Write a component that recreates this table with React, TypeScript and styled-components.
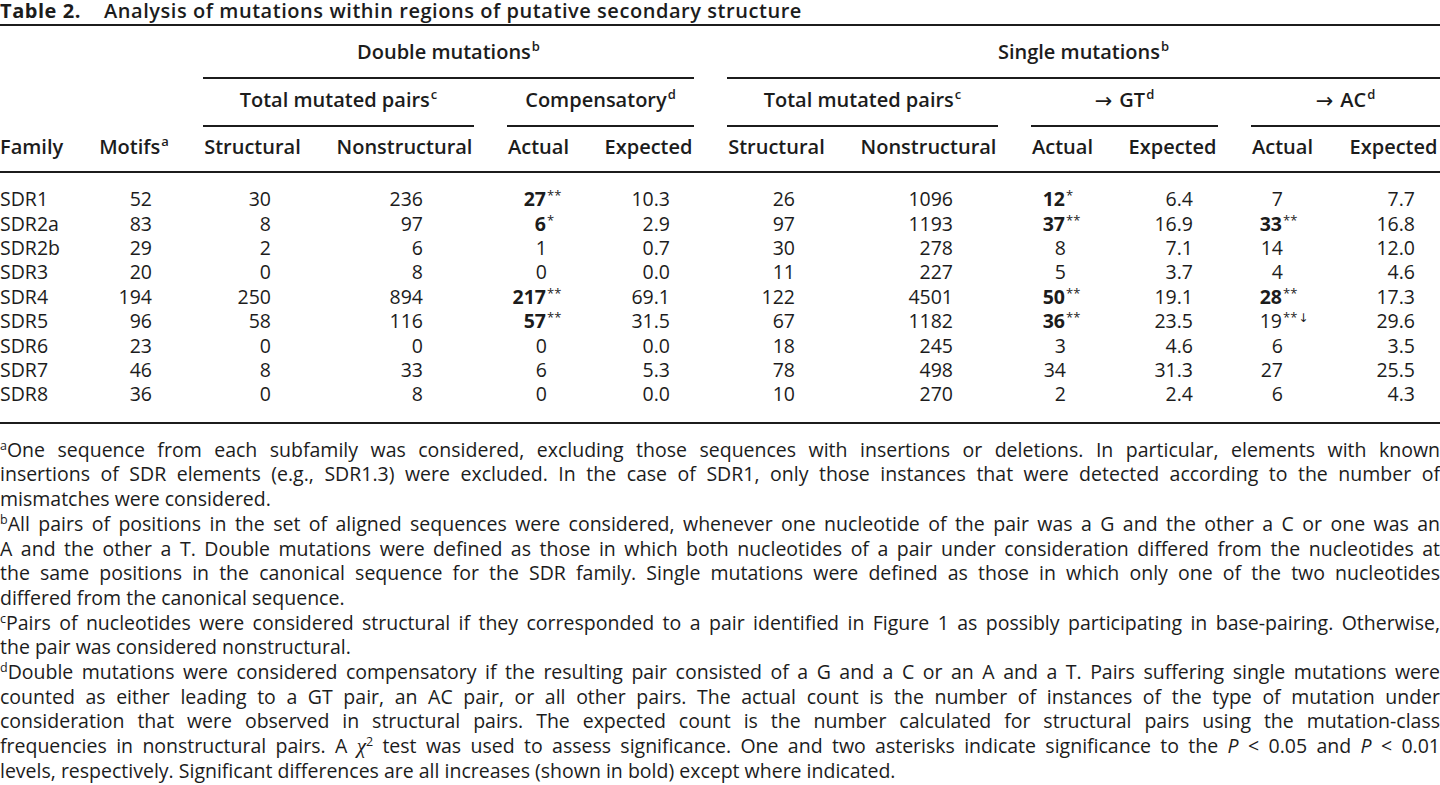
import React from "react";
import styled, { createGlobalStyle } from "styled-components";

const INK = "#1c1c1c";
const COLS =
  "65px 72px 99px 139px 63px 91px 99px 139px 63px 91px 63px minmax(91px, 1fr)";

const GlobalStyle = createGlobalStyle`
  html, body { margin: 0; padding: 0; background: #ffffff; }
  body {
    font-family: "Open Sans", "Noto Sans", "DejaVu Sans", sans-serif;
    color: ${INK};
    -webkit-font-smoothing: antialiased;
  }
`;

const Page = styled.main`
  width: 1440px;
  display: flex;
  flex-direction: column;
`;

const Caption = styled.h1`
  margin: 0;
  display: flex;
  gap: 23px;
  font-size: 20px;
  line-height: 20px;
  font-weight: 600;
  letter-spacing: 0.55px;
  padding: 1px 0 3px;
  border-bottom: 2px solid ${INK};
  white-space: nowrap;
`;

const CaptionLabel = styled.span`
  font-weight: 700;
`;

const TableHead = styled.div`
  display: grid;
  grid-template-columns: ${COLS};
  column-gap: 33px;
  font-size: 20px;
  line-height: 24px;
  font-weight: 600;
  border-bottom: 2px solid ${INK};
`;

const Spanner = styled.div<{ $col: string; $row: number; $pt: number; $pb: number }>`
  grid-column: ${(p) => p.$col};
  grid-row: ${(p) => p.$row};
  text-align: center;
  white-space: nowrap;
  padding: ${(p) => p.$pt}px 0 ${(p) => p.$pb}px;
  border-bottom: 2px solid ${INK};
`;

const ColHead = styled.div<{ $left?: boolean }>`
  grid-row: 3;
  text-align: ${(p) => (p.$left ? "left" : "center")};
  white-space: nowrap;
  padding: 8.5px 0 12px;
`;

const Sup = styled.span`
  font-size: 13px;
  line-height: 0;
  vertical-align: 8px;
  margin-left: 1px;
`;

const Arrow = styled.span`
  font-family: "DejaVu Sans", "Liberation Serif", serif;
  font-weight: 400;
  font-size: 21px;
  line-height: 0;
  vertical-align: -1px;
  margin-right: 7px;
`;

const BodyGrid = styled.div`
  display: grid;
  grid-template-columns: ${COLS};
  grid-template-rows: repeat(9, 24.4px);
  column-gap: 33px;
  font-size: 19.5px;
  line-height: 24.4px;
  padding: 14px 0 15px;
`;

const Rule = styled.div`
  height: 2px;
  background: ${INK};
  flex: none;
`;

const NameCell = styled.div`
  text-align: left;
  white-space: nowrap;
`;

const NumCell = styled.div<{ $pad: number }>`
  text-align: right;
  white-space: nowrap;
  padding-right: ${(p) => p.$pad}px;
`;

const Strong = styled.span`
  font-weight: 700;
`;

const Mark = styled.span`
  display: inline-block;
  width: 0;
  white-space: nowrap;
  font-size: 13px;
  line-height: 0;
  vertical-align: 6px;
  text-align: left;
  padding-left: 1px;
`;

const MarkArrow = styled.span`
  font-family: "DejaVu Sans", "Liberation Serif", serif;
  font-size: 12px;
  margin-left: 1px;
`;

const Notes = styled.section`
  padding-top: 14px;
  font-size: 19.5px;
  line-height: 24.7px;
`;

const Note = styled.div``;

const NoteLine = styled.span<{ $last?: boolean }>`
  display: block;
  text-align: justify;
  text-align-last: ${(p) => (p.$last ? "left" : "justify")};
`;

const NoteSup = styled.span`
  font-size: 12.5px;
  line-height: 0;
  vertical-align: 7px;
`;

const Greek = styled.span`
  font-family: "Liberation Serif", "DejaVu Serif", serif;
  font-style: italic;
  font-size: 21px;
`;

const Italic = styled.span`
  font-style: italic;
`;

type Cell = string | { v: string; b?: boolean; m?: string };

const PADS = [0, 18, 31, 51, 23, 24, 31, 45, 28, 25, 31, 25];

const ROWS: Cell[][] = [
  ["SDR1", "52", "30", "236", { v: "27", b: true, m: "**" }, "10.3", "26", "1096", { v: "12", b: true, m: "*" }, "6.4", "7", "7.7"],
  ["SDR2a", "83", "8", "97", { v: "6", b: true, m: "*" }, "2.9", "97", "1193", { v: "37", b: true, m: "**" }, "16.9", { v: "33", b: true, m: "**" }, "16.8"],
  ["SDR2b", "29", "2", "6", "1", "0.7", "30", "278", "8", "7.1", "14", "12.0"],
  ["SDR3", "20", "0", "8", "0", "0.0", "11", "227", "5", "3.7", "4", "4.6"],
  ["SDR4", "194", "250", "894", { v: "217", b: true, m: "**" }, "69.1", "122", "4501", { v: "50", b: true, m: "**" }, "19.1", { v: "28", b: true, m: "**" }, "17.3"],
  ["SDR5", "96", "58", "116", { v: "57", b: true, m: "**" }, "31.5", "67", "1182", { v: "36", b: true, m: "**" }, "23.5", { v: "19", m: "**↓" }, "29.6"],
  ["SDR6", "23", "0", "0", "0", "0.0", "18", "245", "3", "4.6", "6", "3.5"],
  ["SDR7", "46", "8", "33", "6", "5.3", "78", "498", "34", "31.3", "27", "25.5"],
  ["SDR8", "36", "0", "8", "0", "0.0", "10", "270", "2", "2.4", "6", "4.3"],
];

const COL_HEADS: React.ReactNode[] = [
  "Family",
  <>Motifs<Sup>a</Sup></>,
  "Structural",
  "Nonstructural",
  "Actual",
  "Expected",
  "Structural",
  "Nonstructural",
  "Actual",
  "Expected",
  "Actual",
  "Expected",
];

const renderMark = (m: string) => {
  if (m.endsWith("↓")) {
    return (
      <Mark>
        {m.slice(0, -1)}
        <MarkArrow>↓</MarkArrow>
      </Mark>
    );
  }
  return <Mark>{m}</Mark>;
};

const NOTES: { mark: string; lines: React.ReactNode[] }[] = [
  {
    mark: "a",
    lines: [
      "One sequence from each subfamily was considered, excluding those sequences with insertions or deletions. In particular, elements with known",
      "insertions of SDR elements (e.g., SDR1.3) were excluded. In the case of SDR1, only those instances that were detected according to the number of",
      "mismatches were considered.",
    ],
  },
  {
    mark: "b",
    lines: [
      "All pairs of positions in the set of aligned sequences were considered, whenever one nucleotide of the pair was a G and the other a C or one was an",
      "A and the other a T. Double mutations were defined as those in which both nucleotides of a pair under consideration differed from the nucleotides at",
      "the same positions in the canonical sequence for the SDR family. Single mutations were defined as those in which only one of the two nucleotides",
      "differed from the canonical sequence.",
    ],
  },
  {
    mark: "c",
    lines: [
      "Pairs of nucleotides were considered structural if they corresponded to a pair identified in Figure 1 as possibly participating in base-pairing. Otherwise,",
      "the pair was considered nonstructural.",
    ],
  },
  {
    mark: "d",
    lines: [
      "Double mutations were considered compensatory if the resulting pair consisted of a G and a C or an A and a T. Pairs suffering single mutations were",
      "counted as either leading to a GT pair, an AC pair, or all other pairs. The actual count is the number of instances of the type of mutation under",
      "consideration that were observed in structural pairs. The expected count is the number calculated for structural pairs using the mutation-class",
      <>
        frequencies in nonstructural pairs. A <Greek>χ</Greek>
        <NoteSup>2</NoteSup> test was used to assess significance. One and two asterisks indicate significance to the <Italic>P</Italic> &lt; 0.05 and{" "}
        <Italic>P</Italic> &lt; 0.01
      </>,
      "levels, respectively. Significant differences are all increases (shown in bold) except where indicated.",
    ],
  },
];

export default function App() {
  return (
    <Page>
      <GlobalStyle />
      <Caption>
        <CaptionLabel>Table 2.</CaptionLabel>
        <span>Analysis of mutations within regions of putative secondary structure</span>
      </Caption>

      <TableHead>
        <Spanner $col="3 / 7" $row={1} $pt={13.5} $pb={13}>
          Double mutations<Sup>b</Sup>
        </Spanner>
        <Spanner $col="7 / 13" $row={1} $pt={13.5} $pb={13}>
          Single mutations<Sup>b</Sup>
        </Spanner>
        <Spanner $col="3 / 5" $row={2} $pt={9.2} $pb={13}>
          Total mutated pairs<Sup>c</Sup>
        </Spanner>
        <Spanner $col="5 / 7" $row={2} $pt={9.2} $pb={13}>
          Compensatory<Sup>d</Sup>
        </Spanner>
        <Spanner $col="7 / 9" $row={2} $pt={9.2} $pb={13}>
          Total mutated pairs<Sup>c</Sup>
        </Spanner>
        <Spanner $col="9 / 11" $row={2} $pt={9.2} $pb={13}>
          <Arrow>→</Arrow>GT<Sup>d</Sup>
        </Spanner>
        <Spanner $col="11 / 13" $row={2} $pt={9.2} $pb={13}>
          <Arrow>→</Arrow>AC<Sup>d</Sup>
        </Spanner>
        {COL_HEADS.map((h, i) => (
          <ColHead key={i} $left={i === 0}>
            {h}
          </ColHead>
        ))}
      </TableHead>

      <BodyGrid>
        {ROWS.map((row, r) =>
          row.map((cell, c) => {
            if (c === 0) return <NameCell key={`${r}-${c}`}>{cell as string}</NameCell>;
            const data = typeof cell === "string" ? { v: cell } : cell;
            return (
              <NumCell key={`${r}-${c}`} $pad={PADS[c]}>
                {data.b ? <Strong>{data.v}</Strong> : data.v}
                {data.m ? renderMark(data.m) : null}
              </NumCell>
            );
          })
        )}
      </BodyGrid>
      <Rule />

      <Notes>
        {NOTES.map((n) => (
          <Note key={n.mark}>
            {n.lines.map((line, i) => (
              <NoteLine key={i} $last={i === n.lines.length - 1}>
                {i === 0 ? <NoteSup>{n.mark}</NoteSup> : null}
                {line}
              </NoteLine>
            ))}
          </Note>
        ))}
      </Notes>
    </Page>
  );
}
